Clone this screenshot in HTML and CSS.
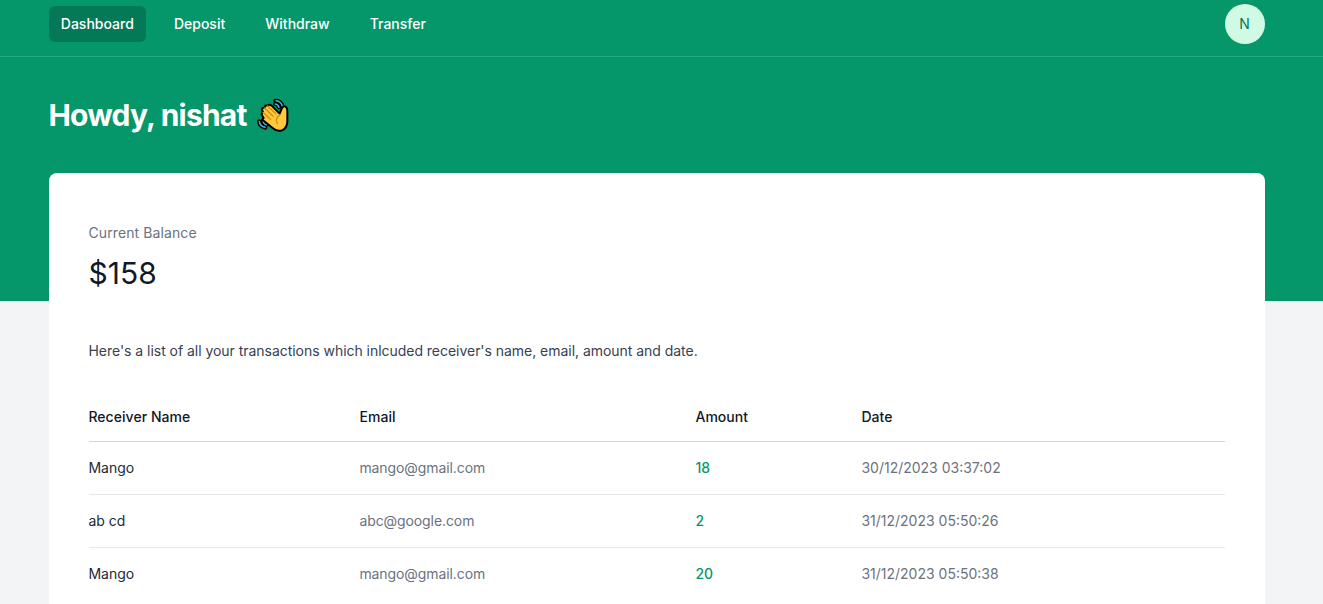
FILE: index.html
```html
<!DOCTYPE html>
<html lang="en">
<head>
<meta charset="utf-8">
<title>Dashboard</title>
<link rel="stylesheet" href="styles.css">
</head>
<body>
<div class="hero">
  <nav class="nav">
    <div class="links">
      <a class="link active">Dashboard</a>
      <a class="link">Deposit</a>
      <a class="link">Withdraw</a>
      <a class="link">Transfer</a>
    </div>
    <div class="avatar">N</div>
  </nav>
  <header class="header">
    <h1>Howdy, nishat</h1>
    <svg class="wave" viewBox="0 0 138 138">
      <g fill="none" stroke-linecap="round" stroke-linejoin="round">
        <g stroke="#000" stroke-width="12">
          <path d="M73 26Q90 25 95 44M72 36Q81 36 84 46M24 88Q26 104 43 107M35 86Q38 96 48 98"/>
        </g>
        <g stroke="#45b5e5" stroke-width="4.5">
          <path d="M75 26Q90 27 94 42M73 36Q81 37 84 46M25 89Q27 103 42 106M36 87Q38 96 47 98"/>
        </g>
      </g>
      <path d="M38 78L33 70Q30 64 36 60L33 54Q33 46 41 47Q41 38 50 41Q55 35 62 41L86 65L93 48Q98 40 105 45Q109 48 109 57V89Q108 109 93 115Q79 120 66 109L36 85Q32 81 38 78Z" fill="#ffc83d" stroke="#000" stroke-width="6" stroke-linejoin="round"/>
      <path d="M50 42L75 65M41 48L66 73M36 61L58 82M87 68Q71 79 79 95" fill="none" stroke="#d48b0b" stroke-width="4" stroke-linecap="round"/>
    </svg>
  </header>
</div>
<main class="card">
  <p class="label">Current Balance</p>
  <p class="balance">$158</p>
  <p class="intro">Here's a list of all your transactions which inlcuded receiver's name, email, amount and date.</p>
  <div class="row head"><span>Receiver Name</span><span>Email</span><span>Amount</span><span>Date</span></div>
  <div class="row"><span class="name">Mango</span><span class="email">mango@gmail.com</span><span class="amount">18</span><span>30/12/2023 03:37:02</span></div>
  <div class="row"><span class="name">ab cd</span><span class="email">abc@google.com</span><span class="amount">2</span><span>31/12/2023 05:50:26</span></div>
  <div class="row last"><span class="name">Mango</span><span class="email">mango@gmail.com</span><span class="amount">20</span><span>31/12/2023 05:50:38</span></div>
</main>
</body>
</html>
```
FILE: styles.css
```css
* { box-sizing: border-box; }
body { margin: 0; background: #f3f4f6; font: 14px/20px Inter, sans-serif; }
h1, p { margin: 0; }
.hero { height: 301px; background: #059669; padding-bottom: 128px; }
.nav { height: 57px; padding: 4px 58px 12px 49px; display: flex; justify-content: space-between; border-bottom: 1px solid #25a97d; }
.links { display: flex; gap: 16px; padding-top: 2px; }
.link { height: 36px; padding: 8px 12.3px 8px 11.8px; border-radius: 6px; color: #fff; font-weight: 500; }
.active { background: #047857; }
.avatar { width: 40px; height: 40px; padding-right: 1px; border-radius: 50%; background: #d1fae5; color: #047857; line-height: 40px; text-align: center; font-weight: 400; }
.header { display: flex; padding: 40px 48.5px 0; }
h1 { width: 202.5px; white-space: nowrap; font-size: 30px; line-height: 36px; font-weight: 700; letter-spacing: -0.8px; color: #fff; }
.wave { width: 46px; height: 46px; margin-top: -5px; }
.card { width: 1216px; height: 431px; margin: -128px 0 0 49px; padding: 50px 40px 0; background: #fff; border-radius: 8px 8px 0 0; }
.label { color: #6b7280; font-weight: 400; letter-spacing: 0.1px; text-indent: -0.5px; }
.balance { margin-top: 12px; font-size: 30px; line-height: 36px; color: #111827; text-indent: -0.4px; }
.intro { margin-top: 50px; color: #374151; letter-spacing: -0.035px; text-indent: -0.5px; }
.row { display: grid; grid-template-columns: 271px 336px 166px 1fr; height: 53px; padding: 16px 0; border-bottom: 1px solid #e5e7eb; color: #6b7280; text-indent: -0.6px; }
.head { margin-top: 28px; padding-top: 18px; border-color: #d1d5db; color: #111827; font-weight: 550; letter-spacing: 0.05px; }
.last { height: 46px; padding-bottom: 10px; border-bottom: 0; }
.name { color: #1f2937; }
.email { letter-spacing: -0.09px; }
.amount { color: #059669; font-weight: 500; }
```
